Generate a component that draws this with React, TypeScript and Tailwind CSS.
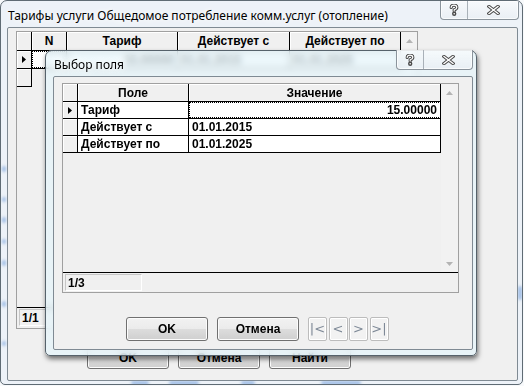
import React from "react";

function RowArrow() {
  return (
    <svg width="4" height="7" viewBox="0 0 4 7">
      <path d="M0 0 L4 3.5 L0 7 Z" fill="#000" />
    </svg>
  );
}

function UpArrow() {
  return (
    <svg width="7" height="4" viewBox="0 0 7 4">
      <path d="M0 4 L3.5 0 L7 4 Z" fill="#b4b4b4" />
    </svg>
  );
}

function DownArrow() {
  return (
    <svg width="7" height="4" viewBox="0 0 7 4">
      <path d="M0 0 L3.5 4 L7 0 Z" fill="#b4b4b4" />
    </svg>
  );
}

function HelpGlyph() {
  return (
    <svg width="10" height="12" viewBox="0 0 10 12">
      <g fill="none" strokeLinecap="round" strokeLinejoin="round">
        <path d="M2.2 3.4 Q2.2 1.2 5 1.2 Q7.8 1.2 7.8 3.4 Q7.8 5 5.2 5.8 L5.2 7" stroke="#4a4a4a" strokeWidth="3.2" />
        <circle cx="5.2" cy="9.8" r="1.2" fill="#4a4a4a" stroke="#4a4a4a" strokeWidth="2" />
        <path d="M2.2 3.4 Q2.2 1.2 5 1.2 Q7.8 1.2 7.8 3.4 Q7.8 5 5.2 5.8 L5.2 7" stroke="#ffffff" strokeWidth="1.2" />
        <circle cx="5.2" cy="9.8" r="0.8" fill="#ffffff" />
      </g>
    </svg>
  );
}

function CloseGlyph() {
  return (
    <svg width="13" height="10" viewBox="0 0 13 10">
      <g fill="none" strokeLinecap="square">
        <path d="M2 1.5 L11 8.5 M11 1.5 L2 8.5" stroke="#4a4a4a" strokeWidth="3.4" />
        <path d="M2 1.5 L11 8.5 M11 1.5 L2 8.5" stroke="#ffffff" strokeWidth="1.4" />
      </g>
    </svg>
  );
}

function CaptionButtons({ close }: { close: string }) {
  return (
    <div className="flex h-full rounded-b-[4px] border border-t-0 border-[#8b949c] bg-[linear-gradient(#ffffff90,#e9eef3c0)] shadow-[inset_0_0_0_1px_#ffffffb0]">
      <div className="flex w-[27px] items-center justify-center border-r border-[#a9b1b8]">
        <HelpGlyph />
      </div>
      <div className={`flex ${close} items-center justify-center`}>
        <CloseGlyph />
      </div>
    </div>
  );
}

const hcell =
  "flex h-full items-center justify-center border-r border-black bg-[#f0f0f0] shadow-[inset_1px_1px_0_#ffffff] font-bold";
const icell = "flex h-full items-center justify-center border-r border-black bg-[#f0f0f0] shadow-[inset_1px_1px_0_#ffffff]";
const dcell = "flex h-full items-center border-r border-black bg-white px-[3px] font-bold";

const winBtn =
  "flex items-center justify-center rounded-[3px] border border-[#707070] bg-[linear-gradient(#f2f2f2,#ebebeb_50%,#dddddd_50%,#cfcfcf)] shadow-[inset_0_0_0_1px_#fcfcfc] font-bold text-[12px] text-black";

const navBtn =
  "flex w-[19px] h-[24px] items-center justify-center rounded-[2px] border border-[#bcbcbc] bg-[#f2f2f2] shadow-[inset_0_0_0_1px_#ffffff] text-[13px] text-[#7d8896] font-['DejaVu_Sans',sans-serif]";

function Spot({ cls }: { cls: string }) {
  return <div className={`absolute rounded-full bg-[#9fbde6] blur-[1.5px] ${cls}`} />;
}

export default function App() {
  return (
    <div className="relative h-[386px] w-[524px] overflow-hidden bg-[#f7f9fb] font-['Liberation_Sans',sans-serif] text-[12px] text-black">
      {/* Outer window */}
      <div className="absolute left-0 top-0 h-[385px] w-[523px] overflow-hidden rounded-t-[7px] rounded-b-[5px] border border-[#5f6b74] bg-[#edf2f8]">
        <Spot cls="left-[1px] top-[165px] h-[6px] w-[4px]" />
        <Spot cls="left-[1px] top-[196px] h-[5px] w-[4px]" />
        <Spot cls="left-[1px] top-[216px] h-[6px] w-[4px]" />
        <Spot cls="left-[1px] top-[238px] h-[5px] w-[4px]" />
        <Spot cls="left-[1px] top-[259px] h-[6px] w-[4px]" />
        <Spot cls="left-[1px] top-[300px] h-[6px] w-[4px]" />
        <Spot cls="left-[1px] top-[340px] h-[5px] w-[4px]" />
        <Spot cls="left-[130px] top-[380px] h-[4px] w-[18px]" />
        <Spot cls="left-[168px] top-[380px] h-[4px] w-[30px]" />
        <Spot cls="left-[240px] top-[380px] h-[4px] w-[14px]" />
        <Spot cls="left-[320px] top-[380px] h-[4px] w-[40px]" />
        <Spot cls="left-[517px] top-[285px] h-[14px] w-[4px]" />

        <div className="relative flex h-full flex-col">
          <div className="flex h-[26px] items-center pl-[7px] pt-[4px] font-['Noto_Sans',sans-serif] text-[12px] [text-shadow:0_0_6px_#ffffff,0_0_10px_#ffffff]">
            Тарифы услуги Общедомое потребление комм.услуг (отопление)
          </div>
          <div className="mb-[3px] ml-[6px] mr-[4px] flex flex-1 flex-col rounded-[2px] border border-[#7f8a93] bg-[#f0f0f0] pl-[8px] pt-[3px]">
            {/* Outer grid */}
            <div className="flex h-[298px] w-[402px] flex-col border border-[#a0a0a0] bg-[#f0f0f0]">
              <div className="flex min-h-0 flex-1">
                <div className="flex w-[384px] flex-col">
                  <div className="flex h-[19px] border-b border-black">
                    <div className={`${icell} w-[15px]`} />
                    <div className={`${hcell} w-[35px]`}>N</div>
                    <div className={`${hcell} w-[111px]`}>Тариф</div>
                    <div className={`${hcell} w-[112px]`}>Действует с</div>
                    <div className={`${hcell} w-[111px]`}>Действует по</div>
                  </div>
                  <div className="flex h-[18px] border-b border-black">
                    <div className={`${icell} w-[15px]`}>
                      <RowArrow />
                    </div>
                    <div className={`${dcell} w-[35px] justify-end outline-1 -outline-offset-1 outline-dotted outline-black`} />
                    <div className={`${dcell} w-[111px] justify-end`}>15.00000</div>
                    <div className={`${dcell} w-[112px]`}>01.01.2015</div>
                    <div className={`${dcell} w-[111px]`}>01.01.2025</div>
                  </div>
                  <div className="flex h-[18px]">
                    <div className={`${icell} w-[15px] border-b border-black`} />
                  </div>
                </div>
                <div className="flex w-[16px] flex-col items-center bg-[#f2f2f2]">
                  <div className="flex h-[17px] items-center justify-center">
                    <UpArrow />
                  </div>
                  <div className="flex-1" />
                  <div className="flex h-[17px] items-center justify-center">
                    <DownArrow />
                  </div>
                </div>
              </div>
              <div className="h-[21px] border-t border-black pl-[2px] pt-[1px]">
                <div className="flex h-[17px] w-[77px] items-center border border-[#c6c6c6] border-b-white border-r-white pl-[2px] font-bold">
                  1/1
                </div>
              </div>
            </div>
            {/* Outer buttons */}
            <div className="ml-[71px] mt-[17px] flex gap-[9px]">
              <div className={`${winBtn} h-[23px] w-[82px]`}>OK</div>
              <div className={`${winBtn} h-[23px] w-[82px]`}>Отмена</div>
              <div className={`${winBtn} h-[23px] w-[82px]`}>Найти</div>
            </div>
          </div>
        </div>
        <div className="absolute right-[3px] top-0 h-[19px]">
          <CaptionButtons close="w-[50px]" />
        </div>
      </div>

      {/* Inner dialog */}
      <div className="absolute left-[45px] top-[50px] flex h-[306px] w-[432px] flex-col rounded-t-[7px] rounded-b-[5px] border border-[#56626b] bg-[#e6f4f9]/75 shadow-[1px_3px_5px_rgba(0,0,0,0.55)] backdrop-blur-[3px]">
        <div className="flex h-[25px] items-center pl-[8px] pt-[3px] font-['Noto_Sans',sans-serif] text-[12px] [text-shadow:0_0_6px_#ffffff,0_0_10px_#ffffff]">
          Выбор поля
        </div>
        <div className="mb-[5px] ml-[7px] mr-[3px] flex flex-1 flex-col rounded-[2px] border border-[#7f8a93] bg-[#f0f0f0] pl-[8px] pt-[6px]">
          <div className="flex h-[210px] w-[397px] flex-col border border-[#a0a0a0] bg-[#f0f0f0]">
            <div className="flex min-h-0 flex-1">
              <div className="flex w-[378px] flex-col">
                <div className="flex h-[18px] border-b border-black">
                  <div className={`${icell} w-[15px]`} />
                  <div className={`${hcell} w-[111px]`}>Поле</div>
                  <div className={`${hcell} w-[252px]`}>Значение</div>
                </div>
                <div className="flex h-[17px] border-b border-black">
                  <div className={`${icell} w-[15px]`}>
                    <RowArrow />
                  </div>
                  <div className={`${dcell} w-[111px]`}>Тариф</div>
                  <div className={`${dcell} w-[252px] justify-end outline-1 -outline-offset-1 outline-dotted outline-black`}>15.00000</div>
                </div>
                <div className="flex h-[17px] border-b border-black">
                  <div className={`${icell} w-[15px]`} />
                  <div className={`${dcell} w-[111px]`}>Действует с</div>
                  <div className={`${dcell} w-[252px]`}>01.01.2015</div>
                </div>
                <div className="flex h-[17px] border-b border-black">
                  <div className={`${icell} w-[15px]`} />
                  <div className={`${dcell} w-[111px]`}>Действует по</div>
                  <div className={`${dcell} w-[252px]`}>01.01.2025</div>
                </div>
              </div>
              <div className="flex w-[17px] flex-col items-center bg-[#f2f2f2]">
                <div className="flex h-[17px] items-center justify-center">
                  <UpArrow />
                </div>
                <div className="flex-1" />
                <div className="flex h-[17px] items-center justify-center">
                  <DownArrow />
                </div>
              </div>
            </div>
            <div className="h-[20px] border-t border-black pl-[2px] pt-[1px]">
              <div className="flex h-[17px] w-[77px] items-center border border-[#c6c6c6] border-b-white border-r-white pl-[2px] font-bold">
                1/3
              </div>
            </div>
          </div>
          <div className="ml-[64px] mt-[24px] flex items-center">
            <div className={`${winBtn} h-[24px] w-[82px]`}>OK</div>
            <div className={`${winBtn} ml-[9px] h-[24px] w-[82px]`}>Отмена</div>
            <div className="ml-[9px] flex gap-[1.5px]">
              <div className={navBtn}>|&lt;</div>
              <div className={navBtn}>&lt;</div>
              <div className={navBtn}>&gt;</div>
              <div className={navBtn}>&gt;|</div>
            </div>
          </div>
        </div>
        <div className="absolute right-[3px] top-[-1px] h-[20px]">
          <CaptionButtons close="w-[48px]" />
        </div>
      </div>
    </div>
  );
}
